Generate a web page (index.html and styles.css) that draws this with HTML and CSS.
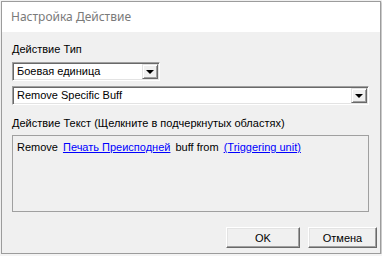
FILE: index.html
```html
<!DOCTYPE html>
<html lang="ru">
<head>
    <meta charset="UTF-8">
    <title>Настройка Действие</title>
    <link rel="stylesheet" href="styles.css">
</head>
<body>
    <div class="dialog">
        <div class="title-bar">Настройка Действие</div>

        <div class="dialog-body">
            <div class="field-label">Действие Тип</div>

            <div class="combo combo-short">
                <span class="combo-value">Боевая единица</span>
                <span class="combo-btn"><span class="arrow"></span></span>
            </div>

            <div class="combo combo-wide">
                <span class="combo-value">Remove Specific Buff</span>
                <span class="combo-btn"><span class="arrow"></span></span>
            </div>

            <div class="field-label text-label">Действие Текст (Щелкните в подчеркнутых областях)</div>

            <div class="action-text">
                <span>Remove</span>
                <a href="#" class="param">Печать Преисподней</a>
                <span>buff from</span>
                <a href="#" class="param">(Triggering unit)</a>
            </div>

            <div class="buttons">
                <button class="btn btn-ok">OK</button>
                <button class="btn btn-cancel">Отмена</button>
            </div>
        </div>
    </div>
</body>
</html>
```

FILE: styles.css
```css
html, body {
    margin: 0;
    padding: 0;
    background-color: #f4f4f4;
}
body {
    font-family: "Liberation Sans", Arial, sans-serif;
    font-size: 11px;
    color: #000;
}
.dialog {
    margin: 1px 0 0 1px;
    width: 378px;
    height: 251px;
    border: 1px solid #9c9c9c;
    background-color: #f0f0f0;
    box-shadow: 1px 1px 2px rgba(0,0,0,0.25);
    display: flex;
    flex-direction: column;
}
.title-bar {
    height: 30px;
    line-height: 30px;
    padding-left: 9px;
    background-color: #fff;
    color: #7a7a7a;
    font-family: "Noto Sans", "Open Sans", sans-serif;
    font-size: 12px;
}
.dialog-body {
    padding: 11px 0 0 10px;
    display: flex;
    flex-direction: column;
}
.field-label {
    height: 13px;
    line-height: 13px;
}
.text-label {
    margin-top: 12px;
}
.combo {
    height: 19px;
    box-sizing: border-box;
    margin-top: 6px;
    display: flex;
    align-items: stretch;
    background-color: #fff;
    border-style: solid;
    border-width: 1px;
    border-color: #a0a0a0 #fff #fff #a0a0a0;
    box-shadow: inset 1px 1px 0 #696969, inset -1px -1px 0 #e3e3e3;
}
.combo-short {
    width: 148px;
}
.combo-wide {
    width: 357px;
    margin-top: 5px;
}
.combo-value {
    flex: 1;
    line-height: 15px;
    padding: 1px 0 0 4px;
}
.combo-btn {
    width: 16px;
    margin: 1px 1px 1px 0;
    box-sizing: border-box;
    background-color: #f0f0f0;
    border-style: solid;
    border-width: 1px;
    border-color: #e3e3e3 #696969 #696969 #e3e3e3;
    box-shadow: inset 1px 1px 0 #fff, inset -1px -1px 0 #a0a0a0;
    display: flex;
    align-items: center;
    justify-content: center;
}
.arrow {
    width: 0;
    height: 0;
    border-left: 4px solid transparent;
    border-right: 4px solid transparent;
    border-top: 4px solid #000;
    margin-top: 1px;
}
.action-text {
    margin-top: 5px;
    width: 357px;
    height: 77px;
    box-sizing: border-box;
    border: 1px solid #a0a0a0;
    padding: 5px 0 0 4px;
    display: flex;
    align-items: flex-start;
    gap: 5px;
    line-height: 13px;
}
.param {
    color: #0000ff;
    text-decoration: underline;
}
.buttons {
    margin-top: 15px;
    display: flex;
    justify-content: flex-end;
    gap: 8px;
    padding-right: 3px;
}
.btn {
    height: 21px;
    padding: 0;
    font-family: "Liberation Sans", Arial, sans-serif;
    font-size: 11px;
    color: #000;
    background-color: #f0f0f0;
    border-style: solid;
    border-width: 1px;
    border-color: #fff #696969 #696969 #fff;
    box-shadow: inset -1px -1px 0 #a0a0a0, inset 1px 1px 0 #e3e3e3;
}
.btn-ok {
    width: 74px;
}
.btn-cancel {
    width: 69px;
}
```
